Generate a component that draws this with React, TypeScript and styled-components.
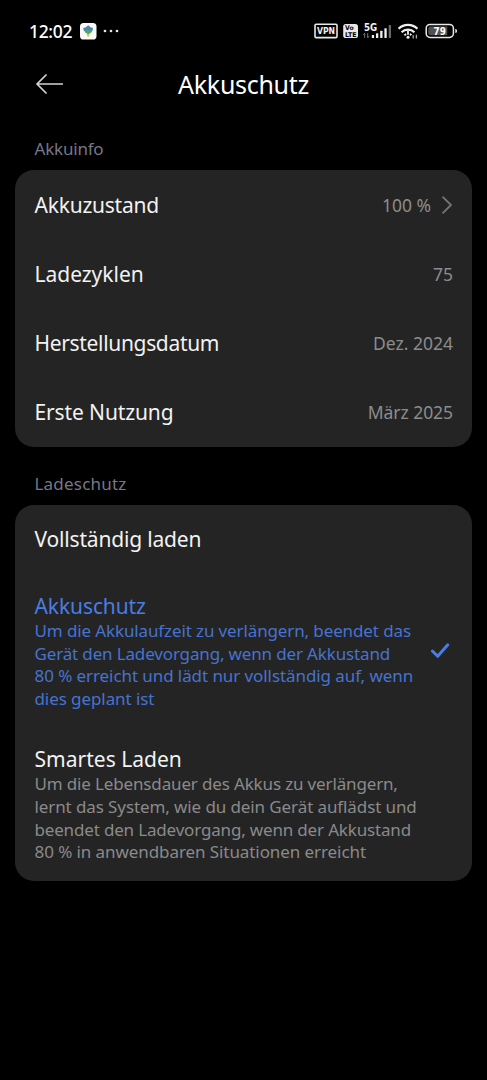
import React from "react";
import styled, { createGlobalStyle } from "styled-components";

const GlobalStyle = createGlobalStyle`
  * { box-sizing: border-box; }
  body {
    margin: 0;
    background: #000;
    color: #f2f2f2;
    font-family: "Noto Sans", "Open Sans", sans-serif;
    font-variant-ligatures: none;
  }
`;

const Screen = styled.main`
  display: flex;
  flex-direction: column;
  width: 487px;
  height: 1080px;
  background: #000;
  overflow: hidden;
`;

const StatusBar = styled.header`
  display: flex;
  align-items: center;
  justify-content: space-between;
  height: 62px;
  padding: 0 29px;
  flex: none;
`;

const StatusGroup = styled.div`
  display: flex;
  align-items: center;
`;

const Clock = styled.span`
  width: 51px;
  font-size: 17.5px;
  line-height: 24px;
  letter-spacing: -0.35px;
  font-weight: 500;
  color: #fff;
`;

const StatusGlyphs = styled.svg`
  display: block;
  flex: none;
`;

const TitleBar = styled.div`
  display: grid;
  grid-template-columns: 64px 1fr 64px;
  align-items: center;
  height: 44px;
  flex: none;
`;

const BackButton = styled.button`
  display: flex;
  justify-content: flex-end;
  padding: 0;
  border: 0;
  background: none;
`;

const PageTitle = styled.h1`
  margin: 0;
  text-align: center;
  font-size: 25px;
  line-height: 34px;
  font-weight: 400;
  letter-spacing: -0.3px;
  color: #fff;
`;

const SectionLabel = styled.h2<{ $top: number; $track?: number }>`
  margin: ${(p) => p.$top}px 0 9px 34.5px;
  font-size: 17px;
  line-height: 24px;
  font-weight: 400;
  letter-spacing: ${(p) => p.$track ?? 0}px;
  color: #777787;
  flex: none;
`;

const Card = styled.section<{ $height: number }>`
  display: flex;
  flex-direction: column;
  height: ${(p) => p.$height}px;
  margin: 0 15px;
  border-radius: 19px;
  background: #242424;
  flex: none;
`;

const InfoRow = styled.div`
  display: flex;
  align-items: center;
  justify-content: space-between;
  height: 69.1px;
  padding: 0 19px 0 19.5px;
`;

const Label = styled.span<{ $track?: number; $active?: boolean }>`
  display: block;
  font-size: 21px;
  line-height: 28px;
  white-space: nowrap;
  letter-spacing: ${(p) => p.$track ?? 0}px;
  color: ${(p) => (p.$active ? "#4a7de3" : "#f2f2f2")};
`;

const Value = styled.span<{ $track?: number }>`
  display: flex;
  align-items: center;
  gap: 11px;
  font-size: 17.5px;
  line-height: 26px;
  white-space: nowrap;
  letter-spacing: ${(p) => p.$track ?? 0}px;
  color: #8c8c8c;
`;

const Option = styled.div`
  display: flex;
  align-items: center;
  justify-content: space-between;
  height: 153.5px;
  padding: 2px 22px 0 19.5px;
`;

const OptionText = styled.div`
  display: flex;
  flex-direction: column;
`;

const Line = styled.span<{ $track?: number; $active?: boolean }>`
  display: block;
  font-size: 17px;
  line-height: 22.7px;
  white-space: nowrap;
  letter-spacing: ${(p) => p.$track ?? 0}px;
  color: ${(p) => (p.$active ? "#4673d0" : "#8a8a8a")};
`;

const IconText = styled.text`
  font-family: "DejaVu Sans", "Noto Sans", sans-serif;
  font-weight: 700;
`;

type TextLine = { text: string; track?: number };

const info: { label: TextLine; value: TextLine; link?: boolean }[] = [
  { label: { text: "Akkuzustand", track: -0.23 }, value: { text: "100 %" }, link: true },
  { label: { text: "Ladezyklen", track: -0.02 }, value: { text: "75" } },
  { label: { text: "Herstellungsdatum", track: -0.33 }, value: { text: "Dez. 2024" } },
  { label: { text: "Erste Nutzung", track: -0.12 }, value: { text: "März 2025", track: -0.06 } },
];

const options: { label: TextLine; lines: TextLine[]; active?: boolean }[] = [
  {
    label: { text: "Akkuschutz", track: -0.1 },
    active: true,
    lines: [
      { text: "Um die Akkulaufzeit zu verlängern, beendet das", track: -0.12 },
      { text: "Gerät den Ladevorgang, wenn der Akkustand", track: -0.15 },
      { text: "80 % erreicht und lädt nur vollständig auf, wenn", track: -0.08 },
      { text: "dies geplant ist", track: -0.08 },
    ],
  },
  {
    label: { text: "Smartes Laden", track: 0.02 },
    lines: [
      { text: "Um die Lebensdauer des Akkus zu verlängern,", track: -0.15 },
      { text: "lernt das System, wie du dein Gerät auflädst und", track: -0.1 },
      { text: "beendet den Ladevorgang, wenn der Akkustand", track: -0.17 },
      { text: "80 % in anwendbaren Situationen erreicht", track: -0.08 },
    ],
  },
];

const LeftStatus = () => (
  <StatusGlyphs width="42" height="20" viewBox="80 21 42 20">
    <rect x="80" y="23" width="16.5" height="16.5" rx="3.6" fill="#fafafa" />
    <path d="M88.2 25.3l2.4 2 2.5.7-.6 2.4-1.7 1.5h-5.2l-2-1.7-.4-2.3 2.6-.6z" fill="#4c86b4" />
    <path d="M84 30.2h8.6l-1.6 2.6-2.8 1.4-2.7-1.4z" fill="#55a36c" />
    <path d="M86.3 33.2l2 1 1.8-1-1.2 3.6h-1.3z" fill="#d7c94f" />
    <circle cx="105" cy="31" r="1.35" fill="#e6e6e6" />
    <circle cx="111" cy="31" r="1.35" fill="#e6e6e6" />
    <circle cx="117" cy="31" r="1.35" fill="#e6e6e6" />
  </StatusGlyphs>
);

const RightStatus = () => (
  <StatusGlyphs width="144" height="30" viewBox="314 16 144 30">
    <rect x="315" y="24.2" width="22" height="13.4" rx="1.2" fill="none" stroke="#e8e8e8" strokeWidth="1.6" />
    <IconText x="326" y="34.2" fontSize="9" textAnchor="middle" textLength="18" lengthAdjust="spacingAndGlyphs" fill="#f0f0f0">VPN</IconText>

    <rect x="343.2" y="24" width="14.8" height="14" rx="2.6" fill="#e8e8e8" />
    <IconText x="345" y="30.4" fontSize="6.4" textLength="8.6" lengthAdjust="spacingAndGlyphs" fill="#000">Vo</IconText>
    <IconText x="345" y="36.8" fontSize="6.4" textLength="11.6" lengthAdjust="spacingAndGlyphs" fill="#000">LTE</IconText>

    <IconText x="364" y="30.7" fontSize="10" textLength="13.2" lengthAdjust="spacingAndGlyphs" fill="#f0f0f0">5G</IconText>
    <path d="M364.7 37.8v-4.6M363.3 34.9l1.4-1.7M367.7 33.2v4.6M369.1 36.1l-1.4 1.7" stroke="#777" strokeWidth="1" fill="none" />
    <g fill="#f0f0f0">
      <rect x="371.8" y="35" width="2.3" height="3" rx=".5" />
      <rect x="376" y="33.2" width="2.3" height="4.8" rx=".5" />
      <rect x="380.2" y="30.7" width="2.3" height="7.3" rx=".5" />
      <rect x="384.4" y="28.3" width="2.3" height="9.7" rx=".5" />
      <rect x="388.7" y="25" width="2.3" height="13" rx=".5" fill="#666" />
    </g>

    <g fill="none" stroke="#f0f0f0" strokeWidth="2.2">
      <path d="M398.6 28.8a13.4 13.4 0 0 1 18.8 0" />
      <path d="M401.6 32.3a9 9 0 0 1 12.8 0" />
      <path d="M404.4 35.4a5 5 0 0 1 1.8-1.3M409.8 34.1a5 5 0 0 1 1.6 1.1" strokeWidth="1.8" />
    </g>
    <path d="M408 30.8v4" stroke="#f0f0f0" strokeWidth="1.8" />
    <circle cx="408" cy="37.2" r="1.5" fill="#f0f0f0" />
    <path d="M413.2 38.4v-3.2M416.4 34.8v3.8" stroke="#aaa" strokeWidth="1.3" />

    <rect x="426.2" y="24.4" width="27.2" height="13" rx="3.8" fill="none" stroke="#e8e8e8" strokeWidth="1.5" />
    <path d="M430.5 26.6h16.8v8.6h-16.8a2.2 2.2 0 0 1-2.2-2.2v-4.2a2.2 2.2 0 0 1 2.2-2.2z" fill="#525252" />
    <path d="M455.3 28.8q1.8.4 1.8 2.1t-1.8 2.1z" fill="#e8e8e8" />
    <IconText x="439.8" y="34.6" fontSize="10" textAnchor="middle" textLength="12.4" lengthAdjust="spacingAndGlyphs" fill="#fff">79</IconText>
  </StatusGlyphs>
);

const BackArrow = () => (
  <svg width="28" height="20" viewBox="0 0 28 20" fill="none" stroke="#d4d4d4" strokeWidth="1.7" strokeLinecap="round" strokeLinejoin="round">
    <path d="M26.3 10H1M10 1L1 10l9 9" />
  </svg>
);

const Chevron = () => (
  <svg width="11" height="18" viewBox="0 0 11 18" fill="none" stroke="#757575" strokeWidth="1.8" strokeLinecap="round" strokeLinejoin="round">
    <path d="M1 1.2l8 7.8-8 7.8" />
  </svg>
);

const Check = () => (
  <svg width="20" height="18" viewBox="0 0 20 18" fill="none" stroke="#4a7de3" strokeWidth="3" strokeLinecap="round" strokeLinejoin="round">
    <path d="M2.4 9l5.3 5.3L17.8 2.8" />
  </svg>
);

export default function App() {
  return (
    <>
      <GlobalStyle />
      <Screen>
        <StatusBar>
          <StatusGroup>
            <Clock>12:02</Clock>
            <LeftStatus />
          </StatusGroup>
          <StatusGroup>
            <RightStatus />
          </StatusGroup>
        </StatusBar>
        <TitleBar>
          <BackButton aria-label="Zurück">
            <BackArrow />
          </BackButton>
          <PageTitle>Akkuschutz</PageTitle>
        </TitleBar>

        <SectionLabel $top={31} $track={-0.2}>Akkuinfo</SectionLabel>
        <Card $height={276.5}>
          {info.map(({ label, value, link }) => (
            <InfoRow key={label.text}>
              <Label $track={label.track}>{label.text}</Label>
              <Value $track={value.track}>
                {value.text}
                {link && <Chevron />}
              </Value>
            </InfoRow>
          ))}
        </Card>

        <SectionLabel $top={25} $track={0.2}>Ladeschutz</SectionLabel>
        <Card $height={376}>
          <InfoRow>
            <Label $track={-0.18}>Vollständig laden</Label>
          </InfoRow>
          {options.map(({ label, lines, active }) => (
            <Option key={label.text}>
              <OptionText>
                <Label $track={label.track} $active={active}>{label.text}</Label>
                {lines.map((line) => (
                  <Line key={line.text} $track={line.track} $active={active}>{line.text}</Line>
                ))}
              </OptionText>
              {active && <Check />}
            </Option>
          ))}
        </Card>
      </Screen>
    </>
  );
}
